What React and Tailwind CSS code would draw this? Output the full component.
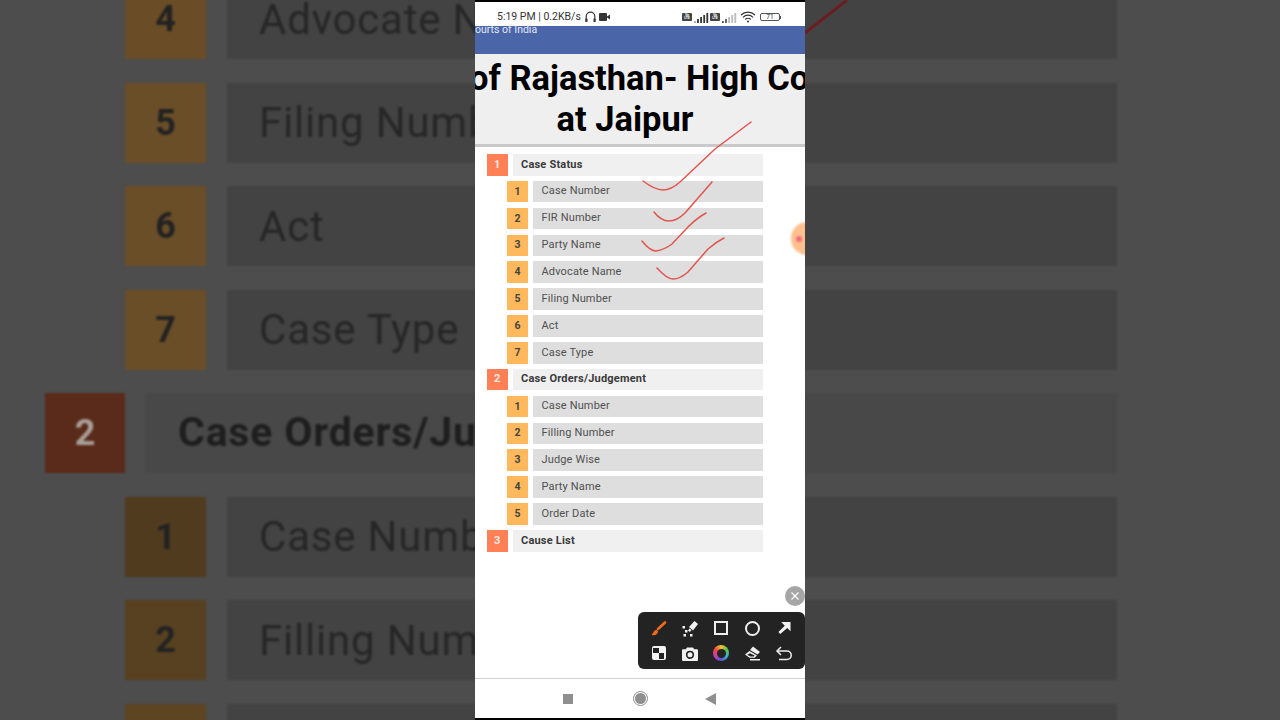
import React from 'react';

const font = { fontFamily: 'Roboto, "Noto Sans", sans-serif' };

const backdrop = [
  { n: '4', label: 'Advocate Name', amber: 'bg-[#6a4d27]' },
  { n: '5', label: 'Filing Number', amber: 'bg-[#6a4e28]' },
  { n: '6', label: 'Act', amber: 'bg-[#6a4e28]' },
  { n: '7', label: 'Case Type', amber: 'bg-[#6a4e28]' },
  { n: '2', label: 'Case Orders/Judgement', section: true },
  { n: '1', label: 'Case Number', amber: 'bg-[#503b1e]' },
  { n: '2', label: 'Filling Number', amber: 'bg-[#574120]' },
  { n: '3', label: 'Judge Wise', amber: 'bg-[#5e4522]' },
];

const list = [
  { n: 1, label: 'Case Status', section: true },
  { n: 1, label: 'Case Number' },
  { n: 2, label: 'FIR Number' },
  { n: 3, label: 'Party Name' },
  { n: 4, label: 'Advocate Name' },
  { n: 5, label: 'Filing Number' },
  { n: 6, label: 'Act' },
  { n: 7, label: 'Case Type' },
  { n: 2, label: 'Case Orders/Judgement', section: true },
  { n: 1, label: 'Case Number' },
  { n: 2, label: 'Filling Number' },
  { n: 3, label: 'Judge Wise' },
  { n: 4, label: 'Party Name' },
  { n: 5, label: 'Order Date' },
  { n: 3, label: 'Cause List', section: true },
];

const Backdrop = () => (
  <div className="absolute inset-0 overflow-hidden bg-[#4d4d4d]">
    <div className="flex flex-col gap-[23.5px] mt-[-21px] blur-[1px]">
      {backdrop.map((row, i) =>
        row.section ? (
          <div key={i} className="flex gap-[21px] pl-[45px] h-[80px] whitespace-nowrap">
            <div className="w-[80px] bg-[#5a2b1a] flex items-center justify-center text-[36px] font-bold text-[#a89f98]">{row.n}</div>
            <div className="w-[971px] bg-[#484848] flex items-center pl-[32px] text-[41px] font-bold text-[#1e1e1e] tracking-[0.8px]">{row.label}</div>
          </div>
        ) : (
          <div key={i} className="flex gap-[21px] pl-[125px] h-[80px] whitespace-nowrap">
            <div className={`w-[81px] ${row.amber} flex items-center justify-center text-[36px] font-bold text-[#222]`}>{row.n}</div>
            <div className="w-[890px] bg-[#434343] flex items-center pl-[32px] text-[42px] text-[#262626] tracking-[0.8px]">{row.label}</div>
          </div>
        )
      )}
    </div>
  </div>
);

const Volte = () => (
  <span className="w-[10px] h-[8px] bg-[#444] rounded-[1px] flex flex-col items-center justify-center text-[3.5px] leading-[3.5px] font-bold text-white">
    <span>Vo</span>
    <span>LTE</span>
  </span>
);

const Signal = ({ faded }) => (
  <svg width="18" height="11" viewBox="0 0 18 11">
    {[0, 1, 2, 3, 4].map((b) => (
      <rect
        key={b}
        x={2 + b * 3.1}
        y={9 - b * 2}
        width="1.8"
        height={2 + b * 2}
        fill={faded ? (b < 2 ? '#555' : '#bbb') : b < 1 ? '#aaa' : '#333'}
      />
    ))}
  </svg>
);

const StatusBar = () => (
  <div className="h-[24px] bg-white flex items-center pt-[6px] pl-[22px] pr-[24px] text-[#333] shrink-0">
    <span className="text-[10.5px] leading-none">5:19 PM | 0.2KB/s</span>
    <svg className="ml-[4px]" width="11" height="12" viewBox="0 0 11 12" fill="none" stroke="#333" strokeWidth="1.2">
      <path d="M1.2 9V5.500a4.300 4.300 0 0 1 8.600 0V9" />
      <rect x="0.300" y="7.500" width="2.200" height="3.500" rx="0.600" fill="#333" stroke="none" />
      <rect x="8.500" y="7.500" width="2.200" height="3.500" rx="0.600" fill="#333" stroke="none" />
    </svg>
    <svg className="ml-[3px]" width="11" height="8" viewBox="0 0 11 8" fill="#333">
      <rect x="0" y="0" width="8" height="8" rx="1" />
      <path d="M8 3.500l3-2v5L8 4.500z" />
    </svg>
    <div className="ml-auto flex items-center">
      <Volte />
      <Signal />
      <Volte />
      <Signal faded />
      <svg className="ml-[2px]" width="16" height="12" viewBox="0 0 16 12" fill="none" stroke="#333" strokeWidth="1.200">
        <path d="M1 4a10 10 0 0 1 14 0" />
        <path d="M3 6.300a7 7 0 0 1 10 0" />
        <path d="M5.200 8.500a4 4 0 0 1 5.600 0" />
        <circle cx="8" cy="10.500" r="1" fill="#333" stroke="none" />
      </svg>
      <span className="ml-[4px] w-[20px] h-[8px] border border-[#555] rounded-[2px] flex items-center justify-center text-[6.5px] leading-none text-[#333]">71</span>
      <span className="w-[1px] h-[3px] bg-[#555]" />
    </div>
  </div>
);

const Rows = () => (
  <div className="flex flex-col gap-[5.36px] pt-[7px] pl-[12px] pr-[42px]">
    {list.map((row, i) =>
      row.section ? (
        <div key={i} className="flex h-[21.5px] gap-[5.5px]">
          <div className="w-[20.5px] bg-[#ff7f57] flex items-center justify-center text-[11px] font-bold text-[#f7e9e2]">{row.n}</div>
          <div className="flex-1 bg-[#f0f0f0] flex items-center pl-[8px] text-[11px] font-bold text-[#3a3a3a] tracking-[0.2px]">{row.label}</div>
        </div>
      ) : (
        <div key={i} className="flex h-[21.5px] gap-[5px] pl-[20px]">
          <div className="w-[21px] bg-[#ffb95c] flex items-center justify-center text-[10.5px] font-bold text-[#444]">{row.n}</div>
          <div className="flex-1 bg-[#dedede] flex items-center pl-[8.5px] text-[11px] text-[#505050] tracking-[0.15px]">{row.label}</div>
        </div>
      )
    )}
  </div>
);

const Checks = () => (
  <svg className="absolute left-0 top-[-2px] pointer-events-none" width="330" height="300" viewBox="475 0 330 300" fill="none" stroke="#e2554f" strokeWidth="1.5" strokeLinecap="round">
    <path d="M643 181Q655 190 663 190Q671 190 680 182L715 149L751 122" />
    <path d="M654 212Q661 221 669 221Q677 221 685 213L712 182" />
    <path d="M642 241Q650 251 656 251Q664 250 672 244L688 227Q697 218 706 213" />
    <path d="M657 268Q667 279 673 279Q680 279 688 272L708 249Q716 242 724 238" />
  </svg>
);

const Tool = ({ children }) => <div className="flex items-center justify-center w-[31.3px] h-[25px]">{children}</div>;

const Toolbar = () => (
  <div className="absolute left-[163px] top-[610px] w-[167px] h-[57px] bg-[#232323] rounded-[6px] px-[5px] py-[4px] grid grid-cols-5 content-center">
    <Tool>
      <svg width="17" height="17" viewBox="0 0 17 17" fill="none" stroke="#f26b1d" strokeLinecap="round">
        <path d="M15 2.500L8 9" strokeWidth="2.600" />
        <path d="M6 10.500c-1.500.5-2 1.500-2.200 2.500-.2.800-.8 1.300-1.800 1.500 2.500.5 5-.5 5.500-3z" fill="#f26b1d" strokeWidth="1.200" />
      </svg>
    </Tool>
    <Tool>
      <svg width="17" height="17" viewBox="0 0 17 17" fill="#f2f2f2">
        <path d="M12.500 1l3.500 3-5 6.500-4-3.500z" />
        <rect x="6.500" y="9" width="2.500" height="2.500" transform="rotate(40 7.700 10.200)" />
        <rect x="0.500" y="6" width="2.500" height="2.500" />
        <rect x="3" y="10" width="2.500" height="2.500" />
        <rect x="1.500" y="14" width="2.500" height="2.500" />
        <rect x="8" y="14" width="2.500" height="2.500" />
      </svg>
    </Tool>
    <Tool>
      <div className="w-[14px] h-[14px] border-2 border-[#eee]" />
    </Tool>
    <Tool>
      <div className="w-[15px] h-[15px] rounded-full border-2 border-[#eee]" />
    </Tool>
    <Tool>
      <svg className="ml-[-1px]" width="14" height="14" viewBox="0 0 15 15" fill="#f2f2f2">
        <path d="M4.500 1h10v10l-3.500-3.500-7.500 6.500-2-2.300 6.800-6.500z" />
      </svg>
    </Tool>
    <Tool>
      <div className="w-[14px] h-[14px] bg-[#f2f2f2] rounded-[2px] p-[1.5px] grid grid-cols-2 grid-rows-2">
        <span className="bg-[#222]" />
        <span />
        <span />
        <span className="bg-[#222]" />
      </div>
    </Tool>
    <Tool>
      <svg width="16" height="15" viewBox="0 0 16 15">
        <path fill="#f2f2f2" d="M5 1.500h6l1.200 1.800H15a1 1 0 0 1 1 1V14a1 1 0 0 1-1 1H1a1 1 0 0 1-1-1V4.300a1 1 0 0 1 1-1h2.800z" />
        <circle cx="8" cy="8.800" r="3.300" fill="none" stroke="#222" strokeWidth="1.600" />
      </svg>
    </Tool>
    <Tool>
      <div className="w-[16px] h-[16px] rounded-full bg-[conic-gradient(#f4c430,#5cc04a,#39b4d8,#5a4fd0,#c83fb0,#ee4444,#f4c430)] flex items-center justify-center">
        <div className="w-[9px] h-[9px] rounded-full bg-[#232323]" />
      </div>
    </Tool>
    <Tool>
      <svg width="17" height="15" viewBox="0 0 17 15" fill="#f2f2f2">
        <path d="M9 0.500l7 5.500-2.500 2.500-7.500-4.500z" />
        <path d="M5.500 5l7.500 4.500-2.300 2.300H5.500L1 8.500zM6 7.200L3.200 8.700 6.300 10.400H9.800L10.600 9.500z" fillRule="evenodd" />
        <rect x="6" y="13" width="10" height="1.500" />
      </svg>
    </Tool>
    <Tool>
      <svg className="ml-[-2px]" width="17" height="15" viewBox="0 0 17 15" fill="none" stroke="#eee" strokeWidth="1.500">
        <path d="M6 1L2 5l4 4" />
        <path d="M2 5h10a3.800 3.800 0 0 1 0 8.500H4" />
      </svg>
    </Tool>
  </div>
);

export default function App() {
  return (
    <div className="relative w-[1280px] h-[720px] overflow-hidden flex justify-center" style={font}>
      <Backdrop />
      <div className="relative w-[330px] h-[720px] bg-white border-y-2 border-black flex flex-col overflow-hidden">
        <StatusBar />
        <div className="h-[28px] bg-[#4a66a8] text-[#e3e8f4] text-[10.5px] leading-none shrink-0">
          <span className="block mt-[-1px]">ourts of India</span>
        </div>
        <div className="h-[93px] bg-[#efefef] border-b-[3px] border-[#c9c9c9] shrink-0 text-[34.5px] font-bold leading-[41px] text-black flex flex-col justify-center overflow-hidden whitespace-nowrap">
          <span className="ml-[-6px]">of Rajasthan- High Co</span>
          <span className="w-[300px] text-center">at Jaipur</span>
        </div>
        <Rows />
        <Checks />
        <div className="absolute left-[316px] top-[220px] w-[32px] h-[33px] rounded-full bg-[#ffc08f] blur-[1px] flex items-center pl-[5px]">
          <div className="w-[6px] h-[6px] rounded-full bg-[#ee6a7a]" />
        </div>
        <div className="absolute left-[310px] top-[584px] w-[20px] h-[20px] rounded-full bg-[#a6a6a6] flex items-center justify-center text-white">
          <svg width="10" height="10" viewBox="0 0 10 10" stroke="#fff" strokeWidth="1.200"><path d="M1.500 1.500l7 7M8.500 1.500l-7 7" /></svg>
        </div>
        <Toolbar />
        <div className="mt-auto h-[40px] border-t border-[#cfcfcf] flex items-center shrink-0 pl-[88px]">
          <div className="w-[10px] h-[10px] bg-[#8f8f8f]" />
          <div className="ml-[60px] w-[15px] h-[15px] rounded-full border border-[#8f8f8f] flex items-center justify-center">
            <div className="w-[11px] h-[11px] rounded-full bg-[#8f8f8f]" />
          </div>
          <svg className="ml-[57px]" width="11" height="12" viewBox="0 0 11 12"><path d="M11 0v12L0 6z" fill="#8f8f8f" /></svg>
        </div>
      </div>
      <svg className="absolute left-[805px] top-0" width="50" height="40" viewBox="0 0 50 40" fill="none" stroke="#6a1e20" strokeWidth="3">
        <path d="M0 33L42 0" />
      </svg>
    </div>
  );
}
